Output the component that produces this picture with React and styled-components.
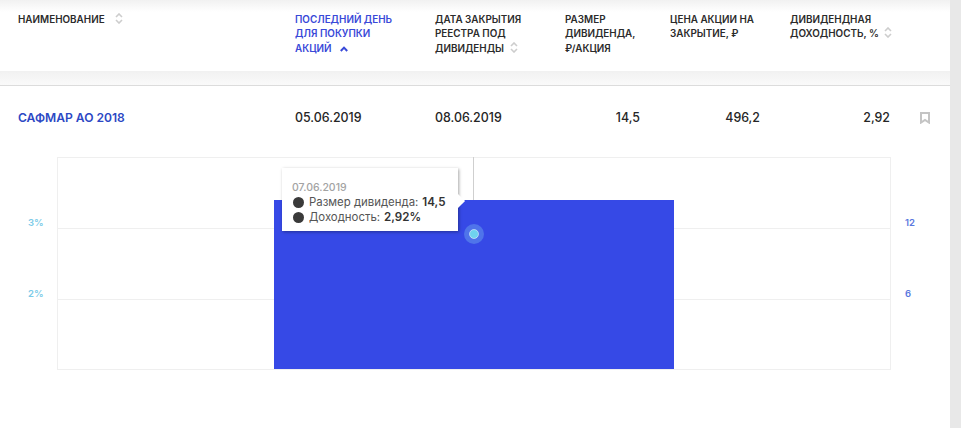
import React from "react";
import styled, { createGlobalStyle } from "styled-components";

const GlobalStyle = createGlobalStyle`
    html, body { margin: 0; padding: 0; background: #e8e8e8; }
    body { font-family: Inter, "Noto Sans", sans-serif; overflow: hidden; }
`

const Page = styled.div`
    width: 950px;
    height: 428px;
    background: #fff;
`

const Row = styled.div`
    display: grid;
    grid-template-columns: 277px 140px 130px 105px 120px 100px 60px;
    padding-left: 18px;
`

const HeadRow = styled(Row)`
    height: 71px;
    box-sizing: border-box;
    padding-top: 12px;
    background: linear-gradient(#f1f1f1 0, #fff 12px);
`

const HeadCell = styled.div`
    font-size: 9.9px;
    line-height: 14.4px;
    font-weight: 600;
    white-space: nowrap;
    color: ${ props => props.$active ? "#3949d8" : "#2b2b2b" };
`

const Band = styled.div`
    height: 14px;
    background: linear-gradient(#f1f1f1, #fafafa);
    border-bottom: 1px solid #dcdcdc;
`

const DataRow = styled(Row)`
    height: 71px;
    box-sizing: border-box;
    padding-bottom: 8px;
    align-items: center;
`

const Cell = styled.div`
    font-size: 12.4px;
    font-weight: 500;
    color: #262626;
    text-align: ${ props => props.$right ? "right" : "left" };
    padding-right: ${ props => props.$pad || 0 }px;
`

const NameCell = styled(Cell)`
    font-size: 12.1px;
    color: #2c48c4;
    font-weight: 600;
`

const Mark = styled.svg`
    display: block;
    margin-left: 30px;
`

const ChartWrap = styled.div`
    position: relative;
    height: 271px;
`

const Chart = styled.svg`
    display: block;
`

const AxisText = styled.text`
    font-family: Inter, sans-serif;
    font-size: 9.5px;
    font-weight: 600;
    fill: ${ props => props.$color };
`

const Tooltip = styled.div`
    position: absolute;
    left: 282px;
    top: 11px;
    width: 176px;
    height: 63px;
    box-sizing: border-box;
    padding: 12px 0 0 10px;
    background: #fff;
    box-shadow: 1px 1px 3px rgb( 0 0 0 / 35% );
    font-size: 11.4px;
    line-height: 15px;
    color: #555;

    &::after {
        content: "";
        position: absolute;
        right: -5px;
        top: 28px;
        width: 10px;
        height: 10px;
        background: #fff;
        transform: rotate(45deg);
    }
`

const TipDate = styled.div`
    font-size: 10.5px;
    line-height: 15px;
    font-weight: 500;
    color: #a3a3a3;
`

const TipLine = styled.div`
    display: flex;
    align-items: center;
    gap: 5px;
    white-space: nowrap;

    b {
        font-size: 11.6px;
        font-weight: 600;
        color: #333;
        margin-left: -1px;
    }
`

const Dot = styled.span`
    width: 11px;
    height: 11px;
    border-radius: 50%;
    background: #3a3a3a;
    margin-left: 1px;
`

const SortSvg = styled.svg`
    margin-left: ${ props => props.$gap }px;
    vertical-align: -1px;
`

const UpSvg = styled.svg`
    margin-left: 6px;
`

function SortIcon( props ) {
    return (
        <SortSvg $gap={ props.gap } width="8" height="11" viewBox="0 0 8 11">
            <path d="M1 4 4 1l3 3M1 7l3 3 3-3" fill="none" stroke="#cdcdcd" strokeWidth="1.6" />
        </SortSvg>
    );
}

function UpIcon( props ) {
    return (
        <UpSvg width="8" height="6" viewBox="0 0 8 6">
            <path d="M0.8 5 4 1.6 7.2 5" fill="none" stroke="#3949d8" strokeWidth="2" />
        </UpSvg>
    );
}

function App() {
    return (
        <Page>
            <GlobalStyle />
            <HeadRow>
                <HeadCell>НАИМЕНОВАНИЕ <SortIcon gap={ 8 } /></HeadCell>
                <HeadCell $active>ПОСЛЕДНИЙ ДЕНЬ<br />ДЛЯ ПОКУПКИ<br />АКЦИЙ <UpIcon /></HeadCell>
                <HeadCell>ДАТА ЗАКРЫТИЯ<br />РЕЕСТРА ПОД<br />ДИВИДЕНДЫ <SortIcon gap={ 3 } /></HeadCell>
                <HeadCell>РАЗМЕР<br />ДИВИДЕНДА,<br />₽/АКЦИЯ</HeadCell>
                <HeadCell>ЦЕНА АКЦИИ НА<br />ЗАКРЫТИЕ, ₽</HeadCell>
                <HeadCell>ДИВИДЕНДНАЯ<br />ДОХОДНОСТЬ, % <SortIcon gap={ 3 } /></HeadCell>
            </HeadRow>
            <Band />
            <DataRow>
                <NameCell>САФМАР АО 2018</NameCell>
                <Cell>05.06.2019</Cell>
                <Cell>08.06.2019</Cell>
                <Cell $right $pad={ 30 }>14,5</Cell>
                <Cell $right $pad={ 30 }>496,2</Cell>
                <Cell $right>2,92</Cell>
                <Mark width="10" height="12" viewBox="0 0 10 12">
                    <path d="M1 1h8v9.6L5 8 1 10.6z" fill="none" stroke="#c4c4c4" strokeWidth="2" />
                </Mark>
            </DataRow>
            <ChartWrap>
                <Chart width="950" height="271" viewBox="0 157 950 271">
                    <rect x="57.5" y="157.5" width="833" height="212" fill="none" stroke="#efefef" />
                    <path d="M58 228.5h832M58 299.5h832" stroke="#efefef" />
                    <path d="M473.5 157v43" stroke="#cfcfcf" />
                    <rect x="274" y="200" width="400" height="169" fill="#3649e6" />
                    <circle cx="474" cy="234" r="10" fill="#4f74ea" />
                    <circle cx="474" cy="234" r="4.5" fill="#6fd3ee" stroke="#fff" strokeOpacity="0.5" />
                    <AxisText x="28" y="226" $color="#7ccbe8">3%</AxisText>
                    <AxisText x="28" y="297" $color="#7ccbe8">2%</AxisText>
                    <AxisText x="905" y="226" $color="#5a78de">12</AxisText>
                    <AxisText x="905" y="297" $color="#5a78de">6</AxisText>
                </Chart>
                <Tooltip>
                    <TipDate>07.06.2019</TipDate>
                    <TipLine><Dot />Размер дивиденда: <b>14,5</b></TipLine>
                    <TipLine><Dot />Доходность: <b>2,92%</b></TipLine>
                </Tooltip>
            </ChartWrap>
        </Page>
    );
}

export default App;
